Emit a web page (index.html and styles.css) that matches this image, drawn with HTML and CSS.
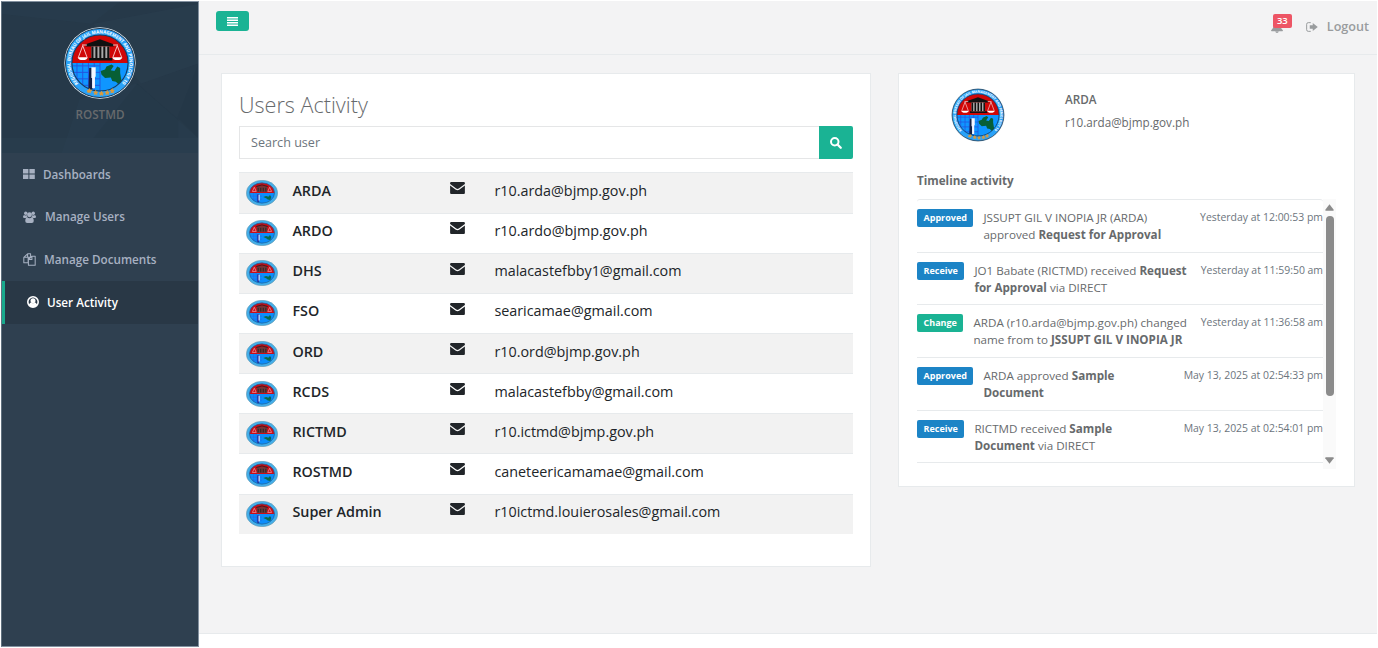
FILE: index.html
```html
<!DOCTYPE html>
<html lang="en">
<head>
<meta charset="utf-8">
<title>Users Activity</title>
<link rel="stylesheet" href="styles.css">
</head>
<body>
<svg class="defs" width="0" height="0">
  <defs>
    <path id="ring" d="M21 79 A41 41 0 1 1 79 79"/>
    <clipPath id="disc"><circle cx="50" cy="50" r="39"/></clipPath>
    <symbol id="seal" viewBox="0 0 100 100" preserveAspectRatio="none">
      <circle cx="50" cy="50" r="49.5" fill="#e8f4fb"/>
      <circle cx="50" cy="50" r="48" fill="#2aa2f8" stroke="#123" stroke-width="1.2"/>
      <g clip-path="url(#disc)">
        <rect width="100" height="50" fill="#d00707"/>
        <rect y="50" width="100" height="50" fill="#0f96ff"/>
        <path d="M12 54H50M12 63H50M12 72H50M12 81H50M18 50V90M26 50V90M34 50V90M42 50V90M50 50V90" stroke="#2452dd" stroke-width="1.3"/>
        <path d="M51 61l6-2 2-4 7-3 3 2-4 6 5 1 4-6 4 2 0 7 2 12-4 4-4-4-5-1-2-5-8 1-5-5z" fill="#075f35"/>
        <path d="M35 57h4l1 29h-6z" fill="#142044"/>
        <path d="M38 56h6v13h-1v16h-4v-14h-1z" fill="#f3f6ff"/>
        <path d="M30 24l20-7 19 7v3H30zM35 43h32v3.500H35z" fill="#111"/>
        <path d="M38 27h25v16H38z" fill="#a9a9a9"/>
        <path d="M39.500 27v16M45 27v16M50.500 27v16M56 27v16M61.500 27v16" stroke="#111" stroke-width="2.800"/>
        <path d="M25 25h7M68 25h7M26 26l-6 16M26 26l6 16M74 26l-6 16M74 26l6 16" stroke="#f9dede" stroke-width="1.200"/>
        <path d="M19 42h14q-1 4-7 4t-7-4zM67 42h14q-1 4-7 4t-7-4z" fill="#fff"/>
      </g>
      <circle cx="50" cy="50" r="39" fill="none" stroke="#153a60" stroke-width="1.5"/>
      <path d="M32 88.500l2-1 1.500-2 1 2 2.500.5-2 1.500v2l-2-1-2 .5zM41 90.500l2-.5 1-2 1 2 2 .5-1.500 1.500.5 2-2-1-2 1 .5-2zM49 91.500l2-.5 1-2 1 2 2 .5-1.500 1.500.5 2-2-1-2 1 .5-2zM57 90.500l2-.5 1-2 1 2 2 .5-1.500 1.500.5 2-2-1-2 1 .5-2zM64 88l2-.5 1-2 1 2 2 .5-1.500 1.500.5 2-2-1-2 1 .5-2z" fill="#e29a35" stroke="#e29a35" stroke-width=".8"/>
    </symbol>
    <symbol id="seal-small" viewBox="0 0 100 100" preserveAspectRatio="none">
      <circle cx="50" cy="50" r="49" fill="#43aee9" stroke="#6f98aa" stroke-width="2"/>
      <g clip-path="url(#disc)">
        <rect width="100" height="50" fill="#cb0d16"/>
        <rect y="50" width="100" height="50" fill="#0c8dfb"/>
        <path d="M34 24h32v22H34z" fill="#6e3a3a"/>
        <path d="M32 25l18-6 18 6M38 30v14M46 30v14M54 30v14M62 30v14" stroke="#2c1e1e" stroke-width="3" fill="none"/>
        <path d="M26 28l-6 16h12zM74 28l-6 16h12z" fill="none" stroke="#eaa0a5" stroke-width="2.5"/>
        <path d="M12 62H50M12 74H50M24 50V90M32 50V90" stroke="#2467e4" stroke-width="2"/>
        <path d="M38 55v31" stroke="#2434a4" stroke-width="6"/>
        <path d="M41 57v22" stroke="#dce8ff" stroke-width="3.500"/>
        <path d="M54 65l9-3 7 2 5-6 4 7-3 12-8-2-5-5z" fill="#086a4c"/>
      </g>
      <circle cx="50" cy="50" r="39" fill="none" stroke="#1c5f9a" stroke-width="2.500"/>
    </symbol>
    <symbol id="mail" viewBox="0 0 16 13">
      <path d="M1.2 0h13.6Q16 0 16 1.2v.9L9.4 7Q8 8 6.6 7L0 2.1v-.9Q0 0 1.2 0zM0 3.8l5.8 4.3q2.2 1.5 4.4 0L16 3.8v8q0 1.2-1.2 1.2H1.2Q0 13 0 11.8z" fill="#212529"/>
    </symbol>
  </defs>
</svg>
<div class="app">
  <aside class="sidebar">
    <div class="profile">
      <svg class="facets" viewBox="0 0 197 152" preserveAspectRatio="none">
        <path d="M0 12L90 22 118 0H0zM60 152L78 98 135 82 197 137V152z" fill="#2a4152" opacity=".3"/>
        <path d="M92 22L197 2V62L140 82zM0 137h197v15H0z" fill="#2c4153" opacity=".4"/>
        <path d="M136 82l40 35 21-54V137l-20-20v20H92z" fill="#1f3342" opacity=".2"/>
      </svg>
      <svg class="logo" viewBox="0 0 100 100">
        <use href="#seal" width="100" height="100"/>
        <text class="ring-text"><textPath href="#ring" textLength="190" lengthAdjust="spacingAndGlyphs" startOffset="1">REGIONAL BUREAU OF JAIL MANAGEMENT AND PENOLOGY 10</textPath></text>
      </svg>
      <span class="profile-name">ROSTMD</span>
    </div>
    <nav>
      <a class="nav-item"><svg class="ic-grid" viewBox="0 0 12 10"><path d="M0 0h5.4v4.5H0zM6.4 0h5.4v4.5H6.4zM0 5.5h5.4V10H0zM6.4 5.5h5.4V10H6.4z"/></svg>Dashboards</a>
      <a class="nav-item"><svg class="ic-users" viewBox="0 0 26 24"><circle cx="5.5" cy="4.5" r="3.4"/><circle cx="20.5" cy="4.5" r="3.4"/><circle cx="13" cy="7.6" r="4.9"/><path d="M2.3 8q3 2 5 .2 0 3 2 4.4Q6.500 12.600 5.500 14H2.500Q0 14 0 11.500T2.300 8zM23.700 8q-3 2-5 .2 0 3-2 4.400 2.800 0 3.800 1.400h3Q26 14 26 11.500T23.700 8zM8.500 12.500q4.500 3.500 9 0 4 .8 4 7.500 0 4-4 4h-9q-4 0-4-4 0-6.700 4-7.500z"/></svg>Manage Users</a>
      <a class="nav-item"><svg class="ic-copy" viewBox="0 0 24 24"><path d="M8.500 1.500H14v6.500H9.500V18H1.500V8zM8.500 1.500V8h-7M16.500 6H22.500V22.500H10V12zM16.500 6v6H10" fill="none" stroke="currentColor" stroke-width="1.900" stroke-linejoin="round"/></svg>Manage Documents</a>
      <a class="nav-item active"><svg class="ic-user" viewBox="0 0 24 24"><path fill-rule="evenodd" d="M12 0a12 12 0 1 0 0 24 12 12 0 0 0 0-24zM12 3a9 9 0 0 1 7.500 13.500q-1-3-3.500-3.500-4 3-8 0-2.500.5-3.500 3.500a9 9 0 0 1 7.500-13.500z"/><circle cx="12" cy="9.500" r="5"/></svg>User Activity</a>
    </nav>
  </aside>
  <div class="page">
    <header class="topbar">
      <button class="menu-btn"><svg viewBox="0 0 11 9"><path d="M0 0h11v1.500H0zM0 2.500h11v1.500H0zM0 5h11v1.500H0zM0 7.500h11V9H0z" fill="#fff"/></svg></button>
      <div class="top-links">
        <span class="bell"><svg viewBox="0 0 24 24"><path d="M12 0q2 0 2 2.200 5 1.300 5 7.300 0 6 5 9.500 0 1.500-1.500 1.500h-21Q0 20.500 0 19q5-3.500 5-9.500 0-6 5-7.300Q10 0 12 0zM8.500 21.200h7Q15 24 12 24t-3.500-2.800z"/></svg><b class="count">33</b></span>
        <a class="logout"><svg viewBox="0 0 24 20"><path d="M9.500 1.300H4.500Q1.300 1.300 1.300 4.500v11q0 3.200 3.200 3.200h5" fill="none" stroke="currentColor" stroke-width="2"/><path d="M7.500 6.500h6V2L23.500 10l-10 8v-4.500h-6z"/></svg>Logout</a>
      </div>
    </header>
    <main class="content">
      <section class="card users">
        <h2>Users Activity</h2>
        <div class="search"><span class="field">Search user</span><button class="go"><svg viewBox="0 0 24 24"><circle cx="9.500" cy="9.500" r="7.500" fill="none" stroke="#fff" stroke-width="4"/><path d="M15 15l6.500 6.500" stroke="#fff" stroke-width="4.500" stroke-linecap="round"/></svg></button></div>
        <div class="table">
          <div class="row"><svg class="avatar"><use href="#seal-small"/></svg><b>ARDA</b><svg class="mail"><use href="#mail"/></svg><span>r10.arda@bjmp.gov.ph</span></div>
          <div class="row"><svg class="avatar"><use href="#seal-small"/></svg><b>ARDO</b><svg class="mail"><use href="#mail"/></svg><span>r10.ardo@bjmp.gov.ph</span></div>
          <div class="row"><svg class="avatar"><use href="#seal-small"/></svg><b>DHS</b><svg class="mail"><use href="#mail"/></svg><span>malacastefbby1@gmail.com</span></div>
          <div class="row"><svg class="avatar"><use href="#seal-small"/></svg><b>FSO</b><svg class="mail"><use href="#mail"/></svg><span>searicamae@gmail.com</span></div>
          <div class="row"><svg class="avatar"><use href="#seal-small"/></svg><b>ORD</b><svg class="mail"><use href="#mail"/></svg><span>r10.ord@bjmp.gov.ph</span></div>
          <div class="row"><svg class="avatar"><use href="#seal-small"/></svg><b>RCDS</b><svg class="mail"><use href="#mail"/></svg><span>malacastefbby@gmail.com</span></div>
          <div class="row"><svg class="avatar"><use href="#seal-small"/></svg><b>RICTMD</b><svg class="mail"><use href="#mail"/></svg><span>r10.ictmd@bjmp.gov.ph</span></div>
          <div class="row"><svg class="avatar"><use href="#seal-small"/></svg><b>ROSTMD</b><svg class="mail"><use href="#mail"/></svg><span>caneteericamamae@gmail.com</span></div>
          <div class="row"><svg class="avatar"><use href="#seal-small"/></svg><b>Super Admin</b><svg class="mail"><use href="#mail"/></svg><span>r10ictmd.louierosales@gmail.com</span></div>
        </div>
      </section>
      <section class="card detail">
        <div class="who">
          <svg class="logo-mid" viewBox="0 0 100 100">
            <use href="#seal" width="100" height="100"/>
            <text class="ring-text"><textPath href="#ring" textLength="190" lengthAdjust="spacingAndGlyphs" startOffset="1">REGIONAL BUREAU OF JAIL MANAGEMENT AND PENOLOGY 10</textPath></text>
          </svg>
          <div class="who-text"><b>ARDA</b><span>r10.arda@bjmp.gov.ph</span></div>
        </div>
        <h3>Timeline activity</h3>
        <div class="scroller">
          <div class="timeline">
            <div class="entry"><span class="tag">Approved</span><p>JSSUPT GIL V INOPIA JR (ARDA)<br>approved <b>Request for Approval</b></p><time>Yesterday at 12:00:53 pm</time></div>
            <div class="entry"><span class="tag">Receive</span><p>JO1 Babate (RICTMD) received <b>Request<br>for Approval</b> via DIRECT</p><time>Yesterday at 11:59:50 am</time></div>
            <div class="entry"><span class="tag green">Change</span><p>ARDA (r10.arda@bjmp.gov.ph) changed<br>name from to <b>JSSUPT GIL V INOPIA JR</b></p><time>Yesterday at 11:36:58 am</time></div>
            <div class="entry"><span class="tag">Approved</span><p>ARDA approved <b>Sample<br>Document</b></p><time>May 13, 2025 at 02:54:33 pm</time></div>
            <div class="entry"><span class="tag">Receive</span><p>RICTMD received <b>Sample<br>Document</b> via DIRECT</p><time>May 13, 2025 at 02:54:01 pm</time></div>
          </div>
          <div class="bar">
            <svg viewBox="0 0 9 7"><path d="M4.500.3L8.700 5.800Q9 6.800 8 6.800H1Q0 6.800.3 5.800z"/></svg>
            <div class="thumb"></div>
            <svg class="down" viewBox="0 0 9 7"><path d="M4.500 6.700L.3 1.200Q0 .2 1 .2H8Q9 .2 8.700 1.200z"/></svg>
          </div>
        </div>
      </section>
    </main>
  </div>
</div>
</body>
</html>
```
FILE: styles.css
```css
* { box-sizing: border-box; }
body {
  margin: 0;
  background: #fff;
  color: #676a6c;
  font: 11.7px/17.5px "Open Sans", sans-serif;
  overflow: hidden;
}
svg { display: block; fill: currentColor; flex: none; }
.defs { position: absolute; }
b { font-weight: 600; }
button { border: 0; padding: 0; display: flex; align-items: center; justify-content: center; background: #1ab394; }

.app { display: flex; height: 648px; padding: 1px; }
.sidebar { width: 198px; height: 646px; background: #2f4050; border: solid #8391a0; border-width: 1px 1px 1px 0; border-left: 1px solid #60707e; flex: none; }
.profile { position: relative; height: 151px; background: #263949; display: flex; flex-direction: column; align-items: center; padding-top: 25px; }
.facets { position: absolute; left: 0; top: 0; width: 100%; height: 100%; }
.logo { position: relative; width: 72px; height: 72px; }
.ring-text { font: 700 6.500px "Open Sans", sans-serif; fill: #fff; }
.profile-name { position: relative; margin-top: 6px; line-height: 18px; font-weight: 600; color: #676a6c; }

.nav-item { display: flex; align-items: center; height: 42.700px; padding-left: 21px; font-weight: 600; color: #a7b1c2; }
.nav-item.active { background: #293846; color: #fff; border-left: 3px solid #19aa8d; padding-left: 22px; }
.ic-grid { width: 12px; height: 10px; margin-right: 8px; }
.ic-users { width: 13px; height: 12px; margin-right: 9px; }
.ic-copy { width: 13px; height: 13px; margin-right: 8px; }
.ic-user { width: 12px; height: 12px; margin-right: 8px; }

.page { flex: 1; height: 633px; background: #f3f3f4; border-bottom: 1px solid #e7eaec; }
.topbar { display: flex; justify-content: space-between; height: 54px; border-bottom: 1px solid #e7eaec; padding: 10px 8px 0 17px; }
.menu-btn { width: 33px; height: 20px; border-radius: 3px; }
.menu-btn svg { width: 11px; height: 9px; }
.top-links { display: flex; color: #999c9e; height: 31px; align-items: center; font-size: 12.600px; font-weight: 600; }
.bell { position: relative; width: 35px; height: 30px; }
.bell svg { width: 12px; height: 12px; margin-top: 9px; }
.count { position: absolute; left: 2px; top: 2px; width: 19px; height: 14px; line-height: 14px; border-radius: 2px; background: #ed5565; color: #fff; font-size: 9.500px; text-align: center; }
.logout { display: flex; align-items: center; height: 31px; }
.logout svg { width: 12px; height: 10px; margin-right: 9px; }

.content { display: flex; align-items: flex-start; gap: 27px; padding: 18px 22px; }
.card { background: #fff; border: 1px solid #e7eaec; }
.users { width: 650px; height: 494px; padding: 17px 17px 0; }
h2 { margin: 0; font-size: 21.600px; line-height: 28px; font-weight: 300; }
.search { display: flex; height: 33px; margin-top: 7px; }
.field { flex: 1; border: 1px solid #e5e6e7; border-right: 0; padding-left: 11px; font-size: 12.600px; line-height: 32px; color: #6c757d; }
.go { width: 34px; height: 33px; border-radius: 0 2px 2px 0; }
.go svg { width: 12px; height: 12px; margin-right: 1px; }
.table { margin-top: 13.400px; }
.row { display: grid; grid-template-columns: 46px 158px 44px 1fr; align-items: start; height: 40.150px; border-top: 1px solid #e7eaec; padding: 6.600px 0 0 7.400px; color: #212529; font-size: 14.350px; line-height: 21.600px; }
.row:nth-child(odd) { background: #f2f2f2; }
.avatar { width: 32px; height: 26px; }
.mail { width: 15px; height: 12px; margin-top: 2.300px; }

.detail { width: 457px; height: 414px; padding: 14px 18px 0; }
.who { display: flex; height: 87px; padding-left: 34px; }
.logo-mid { width: 54px; height: 54px; }
.who-text { display: flex; flex-direction: column; gap: 5px; margin-left: 60px; padding-top: 2px; line-height: 18px; }
h3 { margin: 0; font-size: 11.650px; line-height: 18px; font-weight: 700; margin-top: -3px; }
.scroller { display: flex; height: 270px; margin-top: 9px; }
.timeline { width: 407px; border-top: 1px solid #e7eaec; border-radius: 3px 3px 0 0; }
.entry { display: flex; align-items: flex-start; height: 52.700px; border-bottom: 1px solid #e7eaec; padding-top: 9px; white-space: nowrap; }
.entry b { font-weight: 700; }
.entry p { margin: 0; font-size: 11.650px; line-height: 17px; flex: 1; }
.tag { background: #1c84c6; color: #fff; border-radius: 2px; font-size: 9px; font-weight: 700; line-height: 18px; padding: 0 6.500px; margin-right: 10px; }
.tag.green { background: #1ab394; }
time { font-size: 10.450px; color: #6c757d; }
.bar { width: 13px; background: #fafafa; display: flex; flex-direction: column; align-items: center; color: #8b8b8b; padding-top: 5px; }
.bar svg { width: 9px; height: 7px; }
.thumb { width: 8px; height: 180px; margin-top: 5px; border-radius: 4px; background: #8b8b8b; }
.bar .down { margin-top: 61px; }
```
